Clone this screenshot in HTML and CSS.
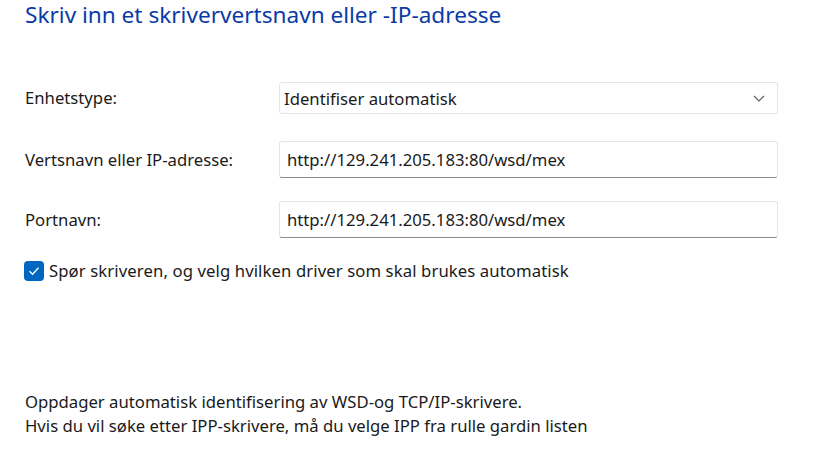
FILE: index.html
```html
<!DOCTYPE html>
<html lang="nb">

<head>
    <meta charset="UTF-8">
    <meta name="viewport" content="width=device-width, initial-scale=1.0">
    <title>Legg til skriver</title>
    <link rel="stylesheet" href="styles.css">
</head>

<body>
    <h1 class="title">Skriv inn et skriververtsnavn eller -IP-adresse</h1>

    <form class="printer-form">
        <div class="row row-type">
            <label class="row-label" for="deviceType">Enhetstype:</label>
            <div class="combo" id="deviceType">
                <span>Identifiser automatisk</span>
                <svg class="chevron" width="12" height="7" viewBox="0 0 12 7">
                    <path d="M1 1 L6 6 L11 1" fill="none" stroke="#5d5d5d" stroke-width="1.1" />
                </svg>
            </div>
        </div>

        <div class="row row-host">
            <label class="row-label" for="host">Vertsnavn eller IP-adresse:</label>
            <input class="text-field" type="text" id="host" value="http://129.241.205.183:80/wsd/mex">
        </div>

        <div class="row row-port">
            <label class="row-label" for="port">Portnavn:</label>
            <input class="text-field" type="text" id="port" value="http://129.241.205.183:80/wsd/mex">
        </div>

        <label class="check-row">
            <span class="check-box">
                <svg width="12" height="10" viewBox="0 0 12 10">
                    <path d="M1.5 5.2 L4.6 8.2 L10.5 1.8" fill="none" stroke="#fff" stroke-width="1.3" />
                </svg>
            </span>
            <span class="check-text">Spør skriveren, og velg hvilken driver som skal brukes automatisk</span>
        </label>
    </form>

    <p class="hint">
        Oppdager automatisk identifisering av WSD-og TCP/IP-skrivere.<br>
        Hvis du vil søke etter IPP-skrivere, må du velge IPP fra rulle gardin listen
    </p>
</body>

</html>
```

FILE: styles.css
```css
* {
    margin: 0;
    padding: 0;
    box-sizing: border-box;
}

body {
    background: #ffffff;
    color: #1a1a1a;
    font-family: "Segoe UI", "Noto Sans", sans-serif;
    font-size: 16.7px;
    padding: 0 0 0 25px;
    width: 814px;
    height: 454px;
    overflow: hidden;
}

.title {
    color: #0a3aa6;
    font-weight: 400;
    font-size: 22.6px;
    line-height: 30px;
}

.printer-form {
    margin-top: 52px;
    width: 754px;
}

.row {
    display: grid;
    grid-template-columns: 254px 499px;
    align-items: center;
}

.row-host {
    margin-top: 27px;
}

.row-port {
    margin-top: 23px;
}

.row-label {
    line-height: 20px;
}

.combo {
    height: 32px;
    border: 1px solid #e5e5e5;
    border-radius: 3px;
    display: flex;
    align-items: center;
    justify-content: space-between;
    padding: 0 12px 0 4px;
}

.text-field {
    height: 37px;
    border: 1px solid #e5e5e5;
    border-bottom: 1px solid #8a8a8a;
    border-radius: 3px;
    padding: 0 7px;
    font: inherit;
    color: #1a1a1a;
    background: #fff;
    outline: none;
}

.check-row {
    display: flex;
    align-items: center;
    gap: 5px;
    margin-top: 21px;
    margin-left: -1px;
}

.check-text {
    letter-spacing: 0.1px;
}

.check-box {
    width: 20px;
    height: 20px;
    border-radius: 4px;
    background: #0067c0;
    display: flex;
    align-items: center;
    justify-content: center;
}

.hint {
    margin-top: 108px;
    line-height: 24px;
}
```
